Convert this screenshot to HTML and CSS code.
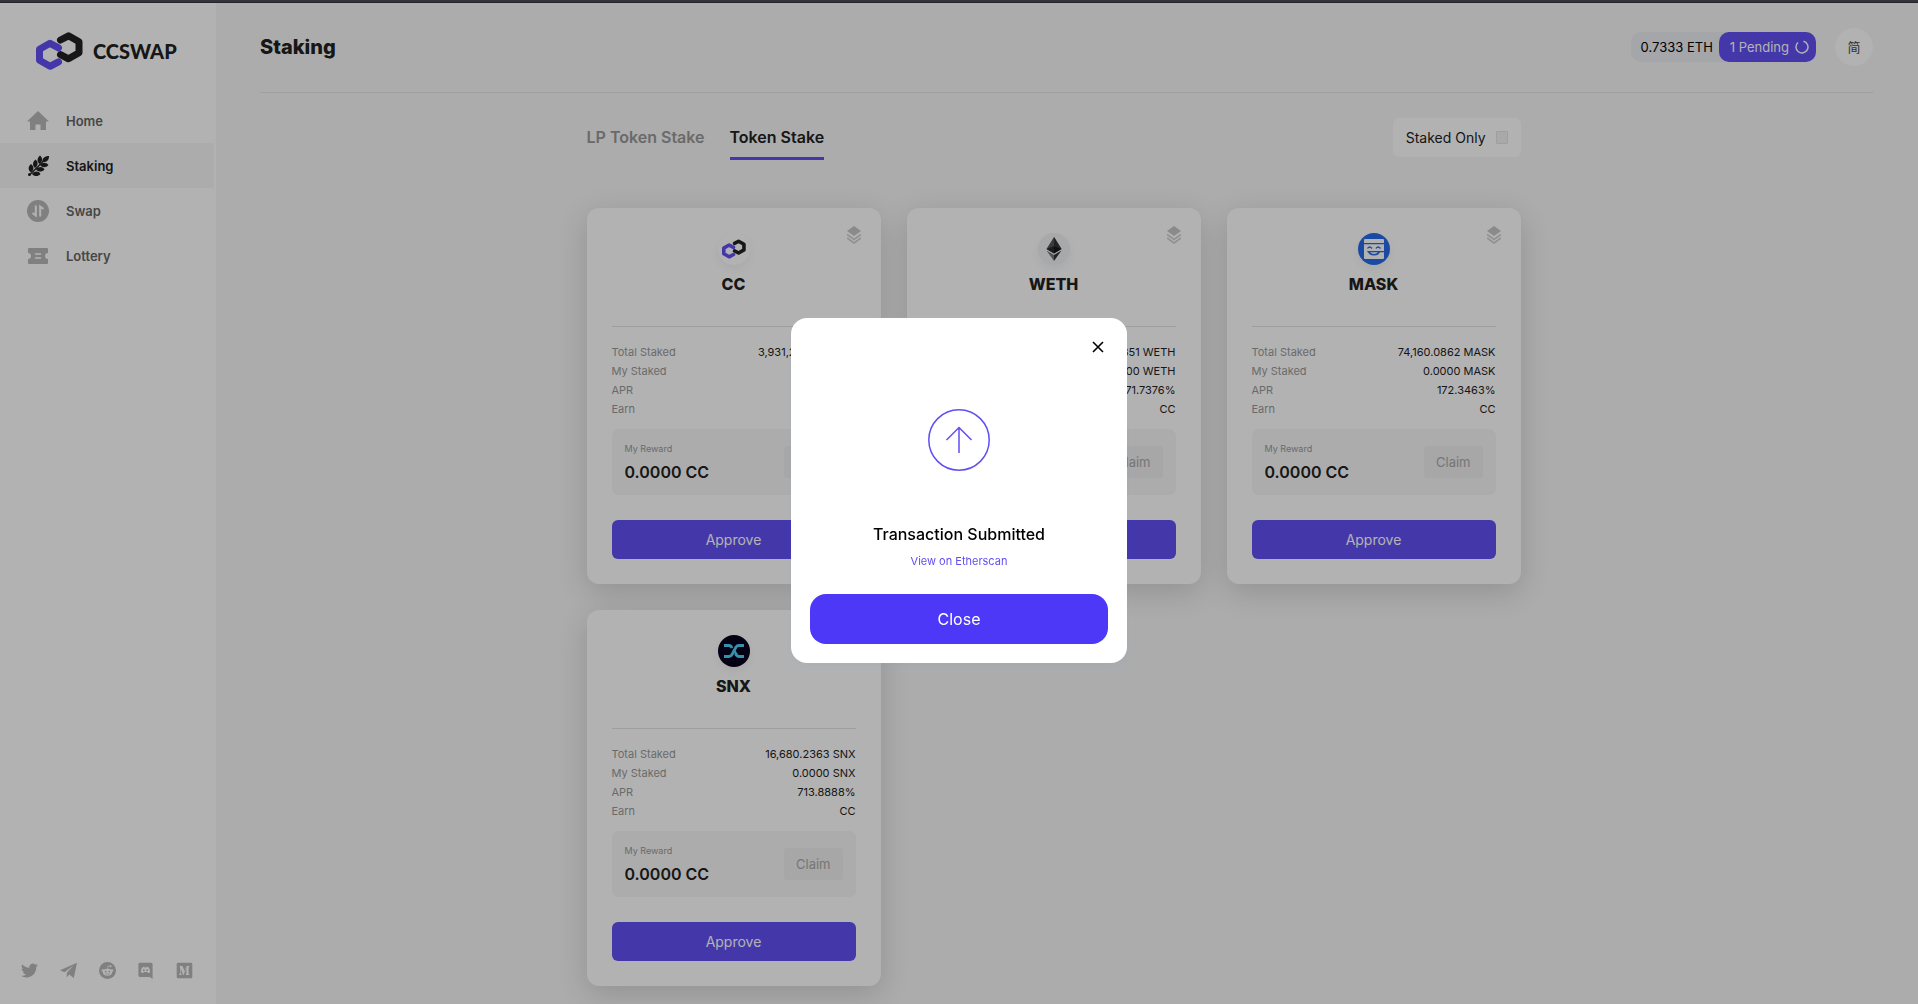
FILE: index.html
```html
<!DOCTYPE html>
<html lang="en">
<head>
    <meta charset="UTF-8">
    <meta name="viewport" content="width=device-width, initial-scale=1.0">
    <title>CCSWAP - Staking</title>
    <link rel="stylesheet" href="styles.css">
</head>
<body>
<!-- Shared icons -->
<svg class="sprite" aria-hidden="true">
    <symbol id="cc-mark" viewBox="36 32 47 38">
        <path d="M60.500 40l8-4.200 10.500 6v11l-10.500 6-8-4.200" fill="none" stroke="#222" stroke-width="7" stroke-linecap="round" stroke-linejoin="round"/>
        <path d="M58.500 47.800l-8.500-4.500-10.500 6v11l10.500 6 8.500-4.500" fill="none" stroke="#614ff4" stroke-width="7" stroke-linecap="round" stroke-linejoin="round"/>
    </symbol>
    <symbol id="layers" viewBox="0 0 14 18">
        <path d="M7 0l7 5-7 5-7-5z" fill="#c6c6c6"/>
        <path d="M0 8.500l7 5 7-5M0 12l7 5 7-5" fill="none" stroke="#d2d2d2" stroke-width="1.800"/>
    </symbol>
</svg>

<div class="top-strip"></div>
<div class="layout">
    <aside class="sidebar">
        <a class="logo" href="#">
            <svg width="47" height="38"><use href="#cc-mark"/></svg>
            <span>CCSWAP</span>
        </a>
        <nav class="menu">
            <a href="#">
                <svg viewBox="0 0 22 22"><path d="M11 1L0 11.500h3V20h5.500v-5.500h5V20H19v-8.500h3z"/></svg>
                Home
            </a>
            <a class="active" href="#">
                <svg viewBox="0 0 22 22">
                    <path d="M2 20.500L20 2.500" stroke="#222" stroke-width="1.500"/>
                    <path d="M15.500 7c-.5-3.500 2-6 6.500-6 0 4.500-2.500 6.500-6.500 6zM12.500 9c-2.800-2.300-2.500-6 .5-8.500 3 2.500 2.800 6-.5 8.500zM8 13c-2.800-2.300-2.500-6.300.5-8.500 3 2.500 2.800 6-.5 8.500zM4 17.500c-3.200-2.500-3-6.300 0-8.500 3.200 2.200 3.300 6 0 8.500zM13 10c2.300-3 6-3 8.500 0-2.500 3-6.200 3-8.500 0zM9 14.500c2.500-3.200 6.300-3.200 8.500 0-2.500 2.800-6.200 2.800-8.500 0zM5 19c2.500-3.200 6.300-3.200 8.500 0-2.500 2.800-6.200 2.800-8.500 0z"/>
                    <circle cx="2.500" cy="19.500" r="1.500"/>
                </svg>
                Staking
            </a>
            <a href="#">
                <svg viewBox="0 0 22 22">
                    <circle cx="11" cy="11" r="11"/>
                    <path d="M8.800 5.500v10L5.500 13M13.200 16.500v-10L16.500 9" fill="none" stroke="#fff" stroke-width="2"/>
                </svg>
                Swap
            </a>
            <a href="#">
                <svg viewBox="0 0 22 22">
                    <path d="M2 3h18a1 1 0 0 1 1 1v4a3 3 0 0 0 0 6v4a1 1 0 0 1-1 1H2a1 1 0 0 1-1-1v-4a3 3 0 0 0 0-6V4a1 1 0 0 1 1-1z"/>
                    <path d="M8 9h6M8 13h6" stroke="#fff" stroke-width="1.600"/>
                </svg>
                Lottery
            </a>
        </nav>
        <div class="socials">
            <a href="#" aria-label="Twitter"><svg viewBox="0 0 24 24"><path d="M23.953 4.570a10 10 0 01-2.825.775 4.958 4.958 0 002.163-2.723c-.951.555-2.005.959-3.127 1.184a4.920 4.920 0 00-8.384 4.482C7.690 8.095 4.067 6.130 1.640 3.162a4.822 4.822 0 00-.666 2.475c0 1.710.870 3.213 2.188 4.096a4.904 4.904 0 01-2.228-.616v.060a4.923 4.923 0 003.946 4.827 4.996 4.996 0 01-2.212.085 4.936 4.936 0 004.604 3.417 9.867 9.867 0 01-6.102 2.105c-.390 0-.779-.023-1.170-.067a13.995 13.995 0 007.557 2.209c9.053 0 13.998-7.496 13.998-13.985 0-.210 0-.420-.015-.630A9.935 9.935 0 0024 4.590z"/></svg></a>
            <a href="#" aria-label="Telegram"><svg viewBox="0 0 24 24"><path d="M24 1L0 11.500l6.500 3L19 5 9.500 15.500V22l3.500-4.500 6.500 5z"/></svg></a>
            <a href="#" aria-label="Reddit"><svg viewBox="0 0 24 24">
                <circle cx="12" cy="12" r="12"/>
                <g fill="#fff"><ellipse cx="12" cy="14.500" rx="6.500" ry="4.800"/><circle cx="5.500" cy="12" r="1.700"/><circle cx="18.500" cy="12" r="1.700"/><circle cx="16.500" cy="6" r="1.300"/></g>
                <path d="M12 10l1-4.500 3.500.5" fill="none" stroke="#fff"/>
                <circle cx="9.500" cy="13.500" r="1.300"/><circle cx="14.500" cy="13.500" r="1.300"/>
                <path d="M9 16.500q3 2 6 0" fill="none" stroke="#b8b8b8"/>
            </svg></a>
            <a href="#" aria-label="Discord"><svg viewBox="0 0 24 24">
                <path d="M4 1h16a2 2 0 0 1 2 2v21l-4-3H4a2 2 0 0 1-2-2V3a2 2 0 0 1 2-2z"/>
                <path d="M5.500 14.500c0-3.500 1-6 2-6.800 1.500-.9 2.500-.9 3-.9l.5.900h2l.5-.9c.5 0 1.500 0 3 .9 1 .8 2 3.300 2 6.800-1 1-2 1.200-3 1.200l-1-1.500h-5l-1 1.500c-1 0-2-.2-3-1.200z" fill="#fff"/>
                <circle cx="9.700" cy="11.500" r="1.300"/><circle cx="14.300" cy="11.500" r="1.300"/>
            </svg></a>
            <a href="#" aria-label="Medium"><svg viewBox="0 0 24 24">
                <rect x="1" y="1" width="22" height="22" rx="2"/>
                <path d="M5 5.500h4l3.200 7.500 3-7.500H19v1l-1.200 1v9l1.200 1v1h-5.500v-1l1.200-1V8.500l-4 10H10L6.700 9v7l1.500 1.700v.8H4.500v-.8L5.800 16V8z" fill="#fff"/>
            </svg></a>
        </div>
    </aside>

    <main class="main">
        <header class="header">
            <h1>Staking</h1>
            <div class="account">
                <div class="wallet">
                    <span class="balance">0.7333 ETH</span>
                    <button class="pending" type="button">1 Pending
                        <svg width="14" height="14" viewBox="0 0 14 14"><path d="M8.500 1.200A6 6 0 1 1 3 2.500" fill="none" stroke="#fff" stroke-width="1.500"/></svg>
                    </button>
                </div>
                <button class="lang" type="button">简</button>
            </div>
        </header>

        <div class="content">
            <div class="toolbar">
                <div class="tabs">
                    <a href="#">LP Token Stake</a>
                    <a class="active" href="#">Token Stake</a>
                </div>
                <label class="staked-only" for="staked-only">Staked Only
                    <input type="checkbox" id="staked-only">
                </label>
            </div>

            <div class="cards">
                <section class="card">
                    <svg class="layers"><use href="#layers"/></svg>
                    <div class="token-icon"><svg width="24" height="20"><use href="#cc-mark"/></svg></div>
                    <h2>CC</h2>
                    <dl class="info">
                        <div><dt>Total Staked</dt><dd>3,931,204.1280 CC</dd></div>
                        <div><dt>My Staked</dt><dd>0.0000 CC</dd></div>
                        <div><dt>APR</dt><dd>168.2051%</dd></div>
                        <div><dt>Earn</dt><dd>CC</dd></div>
                    </dl>
                    <div class="reward">
                        <div><p>My Reward</p><strong>0.0000 CC</strong></div>
                        <button class="claim" type="button" disabled>Claim</button>
                    </div>
                    <button class="approve" type="button">Approve</button>
                </section>

                <section class="card">
                    <svg class="layers"><use href="#layers"/></svg>
                    <div class="token-icon weth">
                        <svg width="16" height="24" viewBox="0 0 16 24">
                            <path d="M8 0l7.500 12L8 16.500.5 12z" fill="#555"/>
                            <path d="M8 0l7.500 12L8 9z" fill="#333"/>
                            <path d="M8 9l7.500 3L8 16.500z" fill="#181818"/>
                            <path d="M8 9v7.500L.5 12z" fill="#2a2a2a"/>
                            <path d="M.5 13.500L8 18v6z" fill="#777"/>
                            <path d="M15.500 13.500L8 18v6z" fill="#333"/>
                        </svg>
                    </div>
                    <h2>WETH</h2>
                    <dl class="info">
                        <div><dt>Total Staked</dt><dd>142.6351 WETH</dd></div>
                        <div><dt>My Staked</dt><dd>0.0000 WETH</dd></div>
                        <div><dt>APR</dt><dd>171.7376%</dd></div>
                        <div><dt>Earn</dt><dd>CC</dd></div>
                    </dl>
                    <div class="reward">
                        <div><p>My Reward</p><strong>0.0000 CC</strong></div>
                        <button class="claim" type="button" disabled>Claim</button>
                    </div>
                    <button class="approve" type="button">Approve</button>
                </section>

                <section class="card">
                    <svg class="layers"><use href="#layers"/></svg>
                    <div class="token-icon mask">
                        <svg width="20" height="20" viewBox="0 0 20 20">
                            <path d="M1 0h18a1 1 0 0 1 1 1v3H0V1a1 1 0 0 1 1-1zM0 5.300h20V12H3.200a7 7 0 0 0 .6 1.300H20V19a1 1 0 0 1-1 1H1a1 1 0 0 1-1-1z" fill="#fff"/>
                            <path d="M3.500 9.500q2-3 4.500 0M12 9.500q2-3 4.500 0" fill="none" stroke="#286bea" stroke-width="1.300"/>
                            <path d="M3.500 12h13q-1.500 4.500-6.500 4.500T3.500 12z" fill="#286bea"/>
                            <path d="M6 13.300h8q-1.500 1.700-4 1.700t-4-1.700z" fill="#fff"/>
                        </svg>
                    </div>
                    <h2>MASK</h2>
                    <dl class="info">
                        <div><dt>Total Staked</dt><dd>74,160.0862 MASK</dd></div>
                        <div><dt>My Staked</dt><dd>0.0000 MASK</dd></div>
                        <div><dt>APR</dt><dd>172.3463%</dd></div>
                        <div><dt>Earn</dt><dd>CC</dd></div>
                    </dl>
                    <div class="reward">
                        <div><p>My Reward</p><strong>0.0000 CC</strong></div>
                        <button class="claim" type="button" disabled>Claim</button>
                    </div>
                    <button class="approve" type="button">Approve</button>
                </section>

                <section class="card">
                    <svg class="layers"><use href="#layers"/></svg>
                    <div class="token-icon snx">
                        <svg width="20" height="14" viewBox="0 0 20 14">
                            <path d="M0 1.500h5Q7 1.500 8 4M20 1.500h-5Q13 1.500 12 3L8 10.500q-1 2-3 2H0M11.500 9.500q1.500 3 3.500 3h5" fill="none" stroke="#51d0f5" stroke-width="2.800"/>
                            <path d="M10.500 7l2 3.500" stroke="#51d0f5" stroke-width="2.500"/>
                        </svg>
                    </div>
                    <h2>SNX</h2>
                    <dl class="info">
                        <div><dt>Total Staked</dt><dd>16,680.2363 SNX</dd></div>
                        <div><dt>My Staked</dt><dd>0.0000 SNX</dd></div>
                        <div><dt>APR</dt><dd>713.8888%</dd></div>
                        <div><dt>Earn</dt><dd>CC</dd></div>
                    </dl>
                    <div class="reward">
                        <div><p>My Reward</p><strong>0.0000 CC</strong></div>
                        <button class="claim" type="button" disabled>Claim</button>
                    </div>
                    <button class="approve" type="button">Approve</button>
                </section>
            </div>
        </div>
    </main>
</div>

<!-- Transaction dialog -->
<div class="overlay">
    <div class="modal" role="dialog" aria-labelledby="modal-title">
        <button class="modal-x" type="button" aria-label="Dismiss">
            <svg width="12" height="12" viewBox="0 0 12 12"><path d="M1 1l10 10M11 1L1 11" stroke="#000" stroke-width="1.600"/></svg>
        </button>
        <svg class="submitted" width="62" height="62" viewBox="0 0 62 62" fill="none" stroke="#614ff4" stroke-width="1.500">
            <circle cx="31" cy="31" r="30.200"/>
            <path d="M31 44V18.500M18.500 31L31 18.500 43.500 31"/>
        </svg>
        <h3 id="modal-title">Transaction Submitted</h3>
        <a href="#">View on Etherscan</a>
        <button class="modal-close" type="button">Close</button>
    </div>
</div>
</body>
</html>
```

FILE: styles.css
```css
* {
    box-sizing: border-box;
    margin: 0;
    padding: 0;
}

body {
    font-family: Inter, "Noto Sans CJK SC", sans-serif;
    background-color: #f6f6f6;
    color: #222;
}

a {
    color: inherit;
    text-decoration: none;
}

button {
    font-family: inherit;
    border: none;
    cursor: pointer;
}

.sprite {
    display: none;
}

.top-strip {
    position: fixed;
    top: 0;
    left: 0;
    right: 0;
    height: 3px;
    background-color: #35343a;
    border-bottom: 1px solid #242428;
    z-index: 20;
}

.layout {
    display: flex;
    min-height: 100vh;
    padding-top: 3px;
}

/* Sidebar */
.sidebar {
    display: flex;
    flex-direction: column;
    width: 216px;
    flex-shrink: 0;
    background-color: #fff;
}

.logo {
    display: flex;
    align-items: center;
    gap: 10px;
    height: 95px;
    padding-left: 36px;
    font-family: Lato, sans-serif;
    font-size: 20px;
    font-weight: 900;
}

.menu {
    padding-right: 2px;
}

.menu a {
    display: flex;
    align-items: center;
    gap: 17px;
    height: 45px;
    padding-left: 27px;
    font-size: 13px;
    font-weight: 600;
    color: #666;
}

.menu svg {
    width: 22px;
    height: 22px;
    fill: #b8b8b8;
}

.menu .active {
    background-color: #f6f6f6;
    color: #222;
}

.menu .active svg {
    fill: #222;
}

.socials {
    display: flex;
    justify-content: space-between;
    margin-top: auto;
    padding: 0 23px 25px 21px;
}

.socials svg {
    display: block;
    width: 17px;
    height: 17px;
    fill: #b8b8b8;
}

/* Header */
.main {
    flex: 1;
    padding: 0 45px 0 44px;
}

.header {
    display: flex;
    align-items: center;
    justify-content: space-between;
    height: 90px;
    padding-bottom: 2px;
    border-bottom: 1px solid #e4e4e4;
}

.header h1 {
    font-size: 20px;
    font-weight: 800;
}

.account {
    display: flex;
    align-items: center;
    gap: 19px;
}

.wallet {
    display: flex;
    align-items: center;
    height: 30px;
    border-radius: 10px;
    background-color: #edeef2;
    font-size: 13px;
}

.balance {
    padding: 0 6px 0 10px;
    color: #000;
}

.pending {
    display: flex;
    align-items: center;
    gap: 6px;
    height: 30px;
    padding: 0 7px 0 11px;
    border-radius: 10px;
    background-color: #614ff4;
    color: #fff;
    font-size: 13px;
}

.lang {
    width: 38px;
    height: 38px;
    border-radius: 50%;
    background-color: #fff;
    color: #444;
    font-size: 13px;
}

/* Content */
.content {
    max-width: 960px;
    margin: 0 auto;
    padding: 25px 26px 17px 0;
}

.toolbar {
    display: flex;
    justify-content: space-between;
    margin-bottom: 48px;
}

.tabs {
    display: flex;
    gap: 25px;
}

.tabs a {
    padding: 9px 0 10px;
    border-bottom: 3px solid transparent;
    font-size: 16px;
    line-height: 20px;
    font-weight: 600;
    color: #999;
}

.tabs .active {
    color: #222;
    border-color: #614ff4;
}

.staked-only {
    display: flex;
    align-items: center;
    gap: 10px;
    height: 39px;
    padding: 0 13px;
    border-radius: 6px;
    background-color: #fff;
    font-size: 14px;
}

.staked-only input {
    appearance: none;
    width: 12px;
    height: 13px;
    border: 1px solid #e4e4e4;
    border-radius: 1px;
    background-color: #f2f2f2;
}

/* Cards */
.cards {
    display: grid;
    grid-template-columns: repeat(3, 1fr);
    gap: 26px;
}

.card {
    position: relative;
    display: flex;
    flex-direction: column;
    padding: 25px;
    border-radius: 12px;
    background-color: #fff;
    box-shadow: 0 8px 30px rgba(0, 0, 0, 0.15);
}

.layers {
    position: absolute;
    top: 18px;
    right: 20px;
    width: 14px;
    height: 18px;
}

.token-icon {
    display: flex;
    align-items: center;
    justify-content: center;
    align-self: center;
    width: 32px;
    height: 32px;
    border-radius: 50%;
    box-shadow: 0 4px 8px rgba(0, 0, 0, 0.05);
}

.weth {
    background-color: #f0f2f4;
}

.mask {
    background-color: #286bea;
}

.snx {
    background-color: #06021e;
}

.card h2 {
    padding: 9px 0 32px;
    border-bottom: 1px solid #e2e2e2;
    text-align: center;
    font-size: 16px;
    line-height: 20px;
    font-weight: 800;
}

.info {
    padding: 16px 0 10px;
    font-size: 11px;
    line-height: 19px;
}

.info div {
    display: flex;
    justify-content: space-between;
}

.info dt {
    color: #999;
}

.reward {
    display: flex;
    align-items: center;
    justify-content: space-between;
    height: 66px;
    margin-bottom: 25px;
    padding: 0 13px;
    border-radius: 7px;
    background-color: #f6f6f6;
}

.reward p {
    margin-bottom: 6px;
    font-size: 9px;
    line-height: 14px;
    color: #999;
}

.reward strong {
    display: block;
    font-size: 16px;
    line-height: 20px;
    font-weight: 600;
}

.claim {
    height: 32px;
    padding: 0 12px;
    border-radius: 4px;
    background-color: #efefef;
    color: #aaa;
    font-size: 13px;
}

.approve {
    height: 39px;
    border-radius: 6px;
    background-color: #614ff4;
    color: #fff;
    font-size: 14px;
}

/* Modal */
.overlay {
    position: fixed;
    inset: 0;
    display: flex;
    align-items: center;
    justify-content: center;
    padding-bottom: 23px;
    background-color: rgba(0, 0, 0, 0.3);
    z-index: 10;
}

.modal {
    display: flex;
    flex-direction: column;
    align-items: center;
    width: 336px;
    padding: 19px;
    border-radius: 16px;
    background-color: #fff;
    box-shadow: 0 4px 8px rgba(47, 128, 237, 0.05);
}

.modal-x {
    align-self: flex-end;
    width: 20px;
    height: 20px;
    background: none;
}

.modal-x svg {
    display: block;
    margin: auto;
}

.submitted {
    margin: 52px 0 51px;
}

.modal h3 {
    color: #000;
    font-size: 16px;
    line-height: 24px;
    font-weight: 500;
}

.modal a {
    margin: 6px 0 24px;
    color: #614ff4;
    font-size: 11px;
    line-height: 18px;
}

.modal-close {
    width: 100%;
    height: 50px;
    border-radius: 16px;
    background-color: #4c38f6;
    color: #fff;
    font-size: 16px;
}
```
